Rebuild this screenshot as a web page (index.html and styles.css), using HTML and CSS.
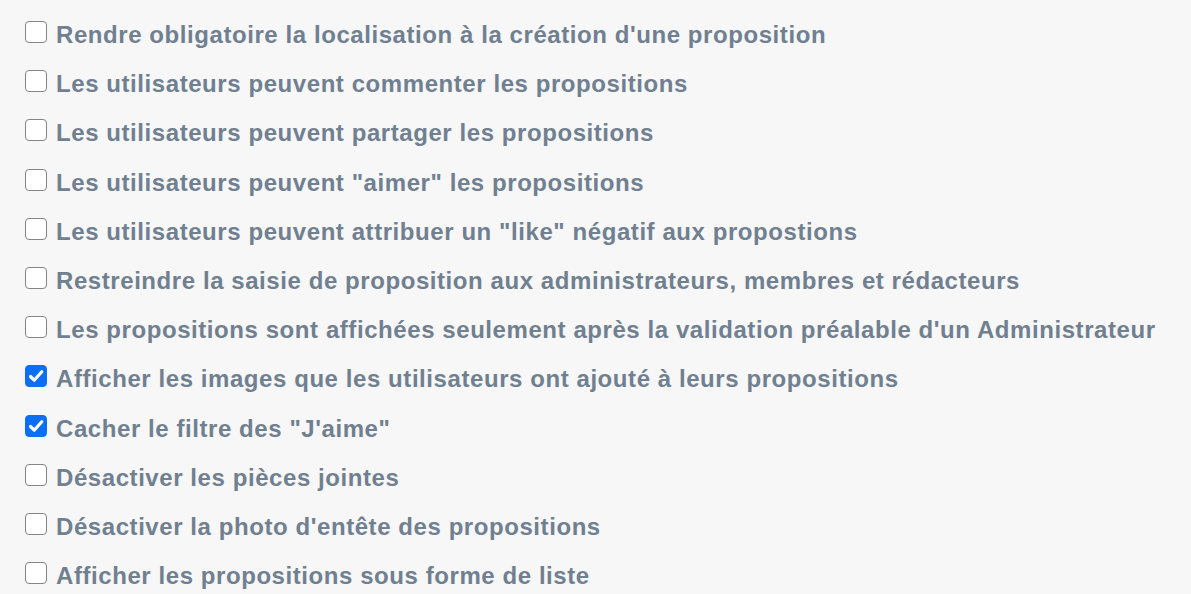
FILE: index.html
```html
<!DOCTYPE html>
<html lang="fr">
<head>
<meta charset="utf-8">
<link rel="stylesheet" href="styles.css">
</head>
<body>
<ul class="options">
  <li><label class="opt"><input type="checkbox"><span>Rendre obligatoire la localisation à la création d'une proposition</span></label></li>
  <li><label class="opt"><input type="checkbox"><span>Les utilisateurs peuvent commenter les propositions</span></label></li>
  <li><label class="opt"><input type="checkbox"><span>Les utilisateurs peuvent partager les propositions</span></label></li>
  <li><label class="opt"><input type="checkbox"><span>Les utilisateurs peuvent "aimer" les propositions</span></label></li>
  <li><label class="opt"><input type="checkbox"><span>Les utilisateurs peuvent attribuer un "like" négatif aux propostions</span></label></li>
  <li><label class="opt"><input type="checkbox"><span>Restreindre la saisie de proposition aux administrateurs, membres et rédacteurs</span></label></li>
  <li><label class="opt"><input type="checkbox"><span>Les propositions sont affichées seulement après la validation préalable d'un Administrateur</span></label></li>
  <li><label class="opt"><input type="checkbox" checked><span>Afficher les images que les utilisateurs ont ajouté à leurs propositions</span></label></li>
  <li><label class="opt"><input type="checkbox" checked><span>Cacher le filtre des "J'aime"</span></label></li>
  <li><label class="opt"><input type="checkbox"><span>Désactiver les pièces jointes</span></label></li>
  <li><label class="opt"><input type="checkbox"><span>Désactiver la photo d'entête des propositions</span></label></li>
  <li><label class="opt"><input type="checkbox"><span>Afficher les propositions sous forme de liste</span></label></li>
</ul>
</body>
</html>
```
FILE: styles.css
```css
html, body {
  margin: 0;
  padding: 0;
  background: #f7f7f7;
}
body {
  font-family: "Liberation Sans", Arial, sans-serif;
}
.options {
  list-style: none;
  margin: 0;
  padding: 21px 0 0 25px;
}
.options li {
  height: 49.2px;
  display: flex;
  align-items: flex-start;
}
.opt {
  display: flex;
  align-items: flex-start;
  gap: 9px;
  font-size: 24px;
  font-weight: bold;
  letter-spacing: 0.57px;
  color: #708090;
  line-height: 28px;
}
.opt input {
  -webkit-appearance: none;
  appearance: none;
  box-sizing: border-box;
  width: 22px;
  height: 22px;
  margin: 0;
  flex: none;
  border: 1.5px solid #858585;
  border-radius: 4px;
  background: #ffffff;
}
.opt input:checked {
  border-color: #0b6ff5;
  background: #0b6ff5 url("data:image/svg+xml;utf8,<svg xmlns='http://www.w3.org/2000/svg' viewBox='0 0 22 22'><path d='M5.5 11.5 L9.2 15.2 L16.8 6.8' fill='none' stroke='white' stroke-width='3.2' stroke-linecap='round' stroke-linejoin='round'/></svg>") center / 22px 22px no-repeat;
}
```
